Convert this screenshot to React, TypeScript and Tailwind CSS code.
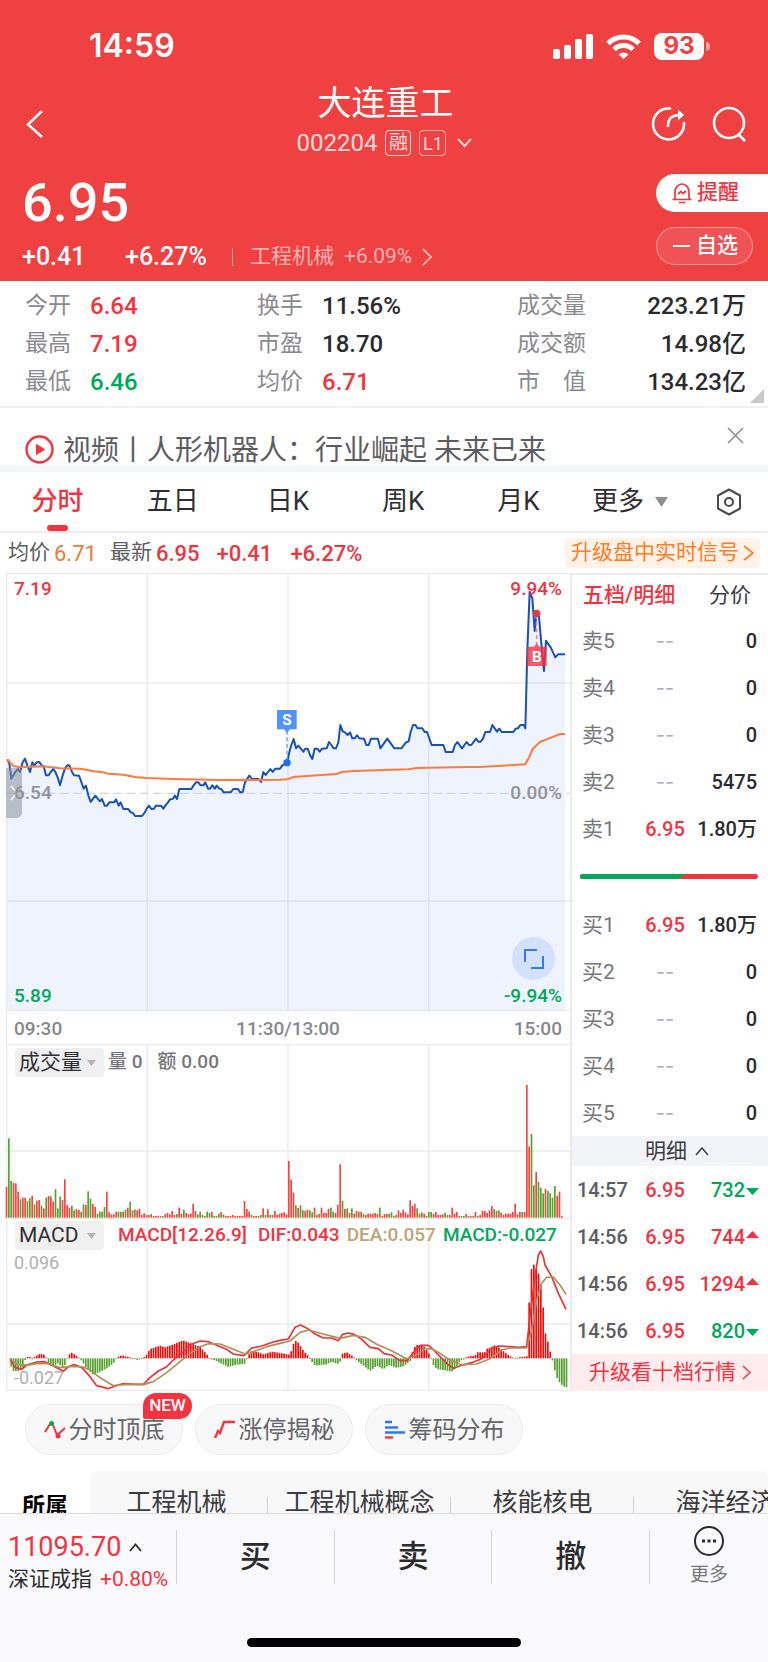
import React from 'react';

type Pt = [number, number];

/* Chart data is stored in chart units: three units per CSS pixel.
   The afternoon session starts AFTERNOON units to the right. */
const AFTERNOON = 840;
const join = (am: Pt[], pm: Pt[]): Pt[] => [...am, ...pm.map(([x, y]): Pt => [x + AFTERNOON, y])];
const line = (pts: Pt[]) => 'M' + pts.map((p) => p.join(' ')).join('L');

const price = join(
  [[22,568],[28,580],[34,626],[40,616],[46,606],[54,597],[60,606],[68,577],[75,566],[82,586],[90,606],[97,577],[103,586],[110,577],[118,576],[125,586],[131,588],[138,616],[146,616],[152,606],[160,597],[166,606],[173,622],[180,646],[188,616],[195,595],[202,586],[208,586],[216,606],[222,616],[237,617],[244,636],[251,656],[258,647],[265,676],[272,696],[279,686],[286,677],[293,686],[300,694],[306,687],[314,707],[321,707],[328,697],[342,697],[348,688],[356,707],[362,697],[370,717],[385,717],[392,727],[398,728],[405,738],[426,738],[434,728],[440,716],[447,707],[454,717],[462,716],[468,707],[483,707],[490,716],[498,704],[504,697],[510,688],[518,687],[525,677],[531,687],[538,657],[574,657],[581,646],[588,637],[595,637],[602,646],[610,646],[616,637],[624,656],[630,656],[637,646],[644,656],[650,647],[658,656],[664,657],[671,667],[692,667],[700,657],[714,657],[721,667],[728,667],[735,637],[748,617],[756,627],[776,627],[783,636],[790,606],[797,615],[811,597],[818,606],[826,596],[840,596],[847,586],[861,578]],
  [[22,577],[28,546],[34,525],[41,507],[48,535],[55,527],[62,535],[70,545],[76,536],[83,536],[90,555],[97,567],[104,536],[112,536],[119,545],[126,536],[140,535],[147,516],[154,525],[161,535],[168,535],[175,517],[181,465],[188,484],[195,487],[203,495],[210,487],[217,505],[224,505],[231,496],[238,505],[252,506],[259,525],[266,525],[273,506],[294,506],[301,535],[322,506],[343,535],[364,535],[378,517],[386,514],[392,486],[399,465],[406,465],[413,475],[427,475],[434,486],[441,486],[455,525],[490,525],[497,546],[518,546],[525,525],[532,516],[546,535],[560,516],[567,525],[574,525],[588,506],[595,515],[602,515],[609,506],[616,486],[630,486],[637,465],[651,485],[658,476],[665,486],[700,486],[707,476],[714,475],[721,465],[731,465],[736,475],[742,240],[749,65],[757,85],[764,183],[770,128],[777,140],[784,220],[792,303],[798,212],[812,232],[826,262],[834,253],[855,253]],
);

const average = join(
  [[22,568],[40,588],[60,592],[130,589],[180,595],[240,596],[260,599],[280,604],[310,607],[325,611],[370,614],[410,622],[440,624],[520,627],[660,630],[780,630],[840,629]],
  [[22,628],[40,621],[80,618],[170,612],[185,606],[220,603],[385,598],[410,594],[560,591],[600,591],[700,585],[736,583],[748,560],[757,538],[780,516],[800,508],[840,492],[855,492]],
);

/* One bar per minute; a negative value marks a falling minute. */
const volume = [
  92,-238,-110,105,103,78,-55,60,60,-50,-58,66,-40,50,53,-36,28,-60,65,64,48,-85,-28,-63,53,115,38,30,-36,-22,26,23,-18,-40,38,-79,-57,41,32,-12,-18,-18,-32,78,16,10,10,18,-18,-18,18,-24,30,-48,22,-25,22,27,8,13,
  8,8,-11,5,5,6,-5,-5,10,14,10,20,8,-11,30,12,-24,14,10,12,42,20,-10,-18,-8,5,-18,-14,17,-5,-5,-12,17,-10,5,5,5,8,5,5,5,5,50,26,18,-8,5,5,-5,-8,28,-8,25,-8,8,20,8,12,14,16,
  10,170,114,75,-37,29,-37,-22,20,24,-22,-16,30,8,-11,30,14,14,26,-30,-18,14,38,160,-51,26,-28,14,-28,12,20,-18,18,-11,8,12,12,12,14,11,-30,5,11,11,-12,-16,-5,8,22,14,24,16,10,52,35,41,-28,12,-16,12,
  5,-17,-17,11,17,8,8,10,-15,-8,8,30,12,17,-5,-5,-5,11,5,-5,5,17,-5,8,21,20,14,22,35,-26,20,-22,15,8,12,12,12,17,42,10,17,-17,17,398,213,-251,-97,137,-107,-90,-73,86,-80,-74,-60,-95,65,78,5,
];

const histogramKeys = join(
  [[33,-25],[40,-38],[54,-38],[68,-28],[75,-5],[82,4],[90,4],[96,-3],[104,5],[120,14],[135,10],[145,-15],[152,-22],[165,-20],[175,-14],[187,-28],[194,-20],[200,-4],[206,10],[213,17],[222,12],[235,3],[245,-8],[260,-30],[280,-50],[300,-40],[320,-30],[340,-15],[350,3],[365,9],[385,4],[400,-1],[412,-5],[425,-2],[437,8],[450,28],[480,38],[495,33],[520,42],[548,54],[570,46],[600,34],[620,12],[630,-2],[645,-6],[660,-14],[685,-26],[705,-20],[735,-16],[745,10],[755,22],[775,18],[790,12],[815,20],[840,16]],
  [[15,14],[25,10],[35,24],[43,55],[55,46],[70,22],[88,3],[95,-10],[105,-22],[140,-18],[155,-10],[172,-17],[180,-10],[185,14],[200,18],[220,5],[228,-5],[245,-18],[270,-38],[290,-22],[310,-33],[325,-20],[350,-28],[370,-24],[390,-8],[400,30],[410,40],[430,38],[445,17],[452,3],[458,-18],[470,-32],[495,-36],[515,-40],[525,-32],[540,-6],[552,-3],[560,5],[585,8],[590,18],[615,18],[620,28],[645,40],[665,25],[690,6],[705,-1],[715,3],[740,6],[744,100],[750,235],[757,292],[765,270],[773,262],[781,232],[788,165],[795,78],[803,50],[810,20],[817,-6],[824,-36],[832,-62],[840,-75],[850,-84],[862,-88]],
);

function valueAt(keys: Pt[], x: number): number {
  const i = keys.findIndex((k) => k[0] >= x);
  if (i <= 0) return keys[Math.max(i, 0)][1];
  const [x0, y0] = keys[i - 1];
  const [x1, y1] = keys[i];
  return y0 + ((y1 - y0) * (x - x0)) / (x1 - x0);
}
const histogram: Pt[] = Array.from({ length: 239 }, (_, i) => 33 + i * 7)
  .filter((x) => x <= 1702)
  .map((x): Pt => [x, valueAt(histogramKeys, x)]);

const dif = join(
  [[30,1046],[45,1072],[65,1078],[80,1065],[110,1056],[135,1055],[160,1068],[190,1084],[205,1070],[220,1064],[245,1072],[270,1100],[290,1127],[325,1136],[345,1128],[370,1121],[410,1123],[430,1123],[450,1103],[475,1083],[500,1070],[520,1050],[545,1030],[570,1004],[600,993],[625,995],[655,1008],[680,1018],[700,1032],[732,1037],[755,1014],[785,1008],[820,996]],
  [[0,991],[25,987],[45,952],[62,945],[85,957],[105,972],[130,984],[155,984],[175,992],[188,973],[205,969],[225,974],[245,988],[270,1012],[295,1016],[312,1031],[335,1035],[360,1052],[380,1052],[400,1028],[420,1006],[445,1006],[455,1014],[480,1040],[500,1060],[520,1075],[545,1066],[575,1058],[605,1046],[630,1020],[655,1008],[690,1010],[715,1012],[740,1010],[750,920],[765,800],[775,735],[782,723],[790,740],[795,765],[815,800],[835,850],[858,898]],
);
const dea = join(
  [[30,1046],[50,1062],[80,1066],[110,1061],[140,1060],[180,1073],[215,1069],[250,1071],[270,1080],[300,1103],[340,1127],[380,1123],[430,1124],[460,1115],[500,1088],[540,1055],[570,1030],[600,1010],[625,1001],[660,1002],[700,1018],[735,1032],[760,1025],[800,1010]],
  [[0,1000],[30,993],[60,967],[85,960],[130,972],[180,985],[220,976],[255,982],[290,1003],[330,1020],[380,1046],[410,1034],[435,1017],[455,1016],[480,1030],[510,1050],[545,1064],[590,1062],[630,1046],[665,1020],[690,1014],[740,1014],[755,960],[770,870],[785,820],[800,802],[820,801],[840,825],[858,853]],
);

const GRID = '#ebebed';

function Grid({ top, bottom, rows }: { top: number; bottom: number; rows: number[] }) {
  return (
    <g stroke={GRID} strokeWidth="4">
      {[20, 442, 864, 1286].map((x) => (
        <path key={x} d={`M${x} ${top}V${bottom}`} />
      ))}
      {rows.map((y) => (
        <path key={y} d={`M18 ${y}H1710`} />
      ))}
    </g>
  );
}

function StatusBar() {
  return (
    <div className="flex h-[84px] items-center justify-between pt-[8px] pr-[58px] pl-[89px]">
      <span className="font-['Inter'] text-[32px] font-semibold">14:59</span>
      <div className="flex items-center gap-[13px]">
        <svg width="40" height="25" viewBox="0 0 40 25" fill="#fff">
          <rect x="0" y="15" width="7" height="10" rx="2" />
          <rect x="11" y="11" width="7" height="14" rx="2" />
          <rect x="22" y="5" width="7" height="20" rx="2" />
          <rect x="33" y="0" width="7" height="25" rx="2" />
        </svg>
        <svg width="35" height="25" viewBox="0 0 35 25" fill="none" stroke="#fff" strokeWidth="5">
          <path d="M2 9.500a22 22 0 0 1 31 0" />
          <path d="M8 15.500a13.500 13.500 0 0 1 19 0" />
          <path d="M12.500 20.500a7 7 0 0 1 10 0L17.500 25z" fill="#fff" stroke="none" />
        </svg>
        <div className="flex items-center gap-[2px]">
          <span className="flex h-[27px] w-[50px] items-center justify-center rounded-[8px] bg-white font-['Inter'] text-[24px] font-bold text-[#ef4042]">
            93
          </span>
          <span className="h-[9px] w-[4px] rounded-r-full bg-white/50" />
        </div>
      </div>
    </div>
  );
}

function Header() {
  return (
    <header className="h-[281px] bg-[#ef4042] text-white">
      <StatusBar />
      <div className="flex h-[80px] items-center justify-between pr-[21px] pl-[24px]">
        <div className="flex w-[96px]">
          <button aria-label="返回">
            <svg width="22" height="30" viewBox="0 0 22 30" fill="none" stroke="#fff" strokeWidth="2.500">
              <path d="M18 2L4 15.500L18 28" />
            </svg>
          </button>
        </div>
        <div className="flex flex-col items-center pb-[10px]">
          <h1 className="text-[34px] leading-[48px]">大连重工</h1>
          <div className="flex h-[32px] items-center gap-[8px] text-white/80">
            <span className="text-[24px]">002204</span>
            <span className="flex h-[26px] w-[26px] items-center justify-center rounded-[4px] border border-white/80 text-[19px]">融</span>
            <span className="flex h-[26px] w-[27px] items-center justify-center rounded-[4px] border border-white/60 text-[18px]">L1</span>
            <svg width="20" height="12" viewBox="0 0 20 12" fill="none" stroke="#fff" strokeOpacity=".8" strokeWidth="2">
              <path d="M4 2L10.500 9L17 2" />
            </svg>
          </div>
        </div>
        <div className="flex w-[96px] items-center justify-end gap-[24px]">
          <button aria-label="分享">
            <svg width="36" height="36" viewBox="0 0 36 36" fill="none" stroke="#fff" strokeWidth="2.600" strokeLinecap="round">
              <path d="M19 2.500A15.500 15.500 0 1 0 33 17" />
              <path d="M17 20c0-7 4-11 12-11" />
              <path d="M27 3.500L33 9L27 14.500z" fill="#fff" stroke="none" />
            </svg>
          </button>
          <button aria-label="搜索">
            <svg width="36" height="36" viewBox="0 0 36 36" fill="none" stroke="#fff" strokeWidth="2.600">
              <circle cx="18" cy="17" r="15" />
              <path d="M27 28L34 35" />
            </svg>
          </button>
        </div>
      </div>
      <div className="flex justify-between pt-[10px] pl-[22px]">
        <div>
          <div className="h-[58px] text-[54px] leading-[58px] font-medium">6.95</div>
          <div className="mt-[8px] flex h-[34px] items-center text-[25px] font-medium">
            <span className="w-[103px]">+0.41</span>
            <span className="w-[107px]">+6.27%</span>
            <span className="mr-[17px] h-[18px] w-px bg-white/50" />
            <a href="#sector" className="flex items-center gap-[10px] text-[21px] font-normal text-white/60">
              <span>工程机械</span>
              <span>+6.09%</span>
              <svg width="10" height="18" viewBox="0 0 10 18" fill="none" stroke="#fff" strokeOpacity=".7" strokeWidth="1.600">
                <path d="M1 1L9 9L1 17" />
              </svg>
            </a>
          </div>
        </div>
        <div className="flex w-[112px] flex-col gap-[15px]">
          <button className="flex h-[38px] items-center gap-[4px] rounded-l-full bg-white pl-[15px] text-[21px] font-medium text-[#f5333f]">
            <svg width="22" height="22" viewBox="0 0 22 22" fill="none" stroke="#f5333f" strokeWidth="1.700">
              <path d="M4 17V10a7 8 0 0 1 14 0v7M1.500 17.500h19M8 20.500h6" />
              <path d="M7 12L10 9.500L12 11.500L15 9" />
            </svg>
            提醒
          </button>
          <button className="flex h-[38px] w-[97px] items-center gap-[6px] rounded-full border border-white/40 bg-white/10 pl-[16px] text-[21px] font-medium">
            <span className="h-[2px] w-[17px] bg-white" />
            自选
          </button>
        </div>
      </div>
    </header>
  );
}

const RED = 'text-[#f5333f]';
const GREEN = 'text-[#00a85a]';
const INK = 'text-[#2b2b2e]';

const stats = [
  [['今开', '6.64', RED], ['最高', '7.19', RED], ['最低', '6.46', GREEN]],
  [['换手', '11.56%', INK], ['市盈', '18.70', INK], ['均价', '6.71', RED]],
  [['成交量', '223.21万', INK], ['成交额', '14.98亿', INK], ['市　值', '134.23亿', INK]],
];
const statWidths = ['w-[232px]', 'flex-1', 'w-[229px]'];

function Stats() {
  return (
    <section className="relative flex h-[127px] border-b-2 border-[#f1f1f3] pt-[6px] pr-[22px] pl-[25px]">
      {stats.map((col, i) => (
        <dl key={i} className={statWidths[i]}>
          {col.map(([label, value, color]) => (
            <div key={label} className={`flex h-[38px] items-center ${i === 2 ? 'justify-between' : 'gap-[19px]'}`}>
              <dt className="text-[23px] text-[#8a8a8e]">{label}</dt>
              <dd className={`text-[24px] font-medium ${color}`}>{value}</dd>
            </div>
          ))}
        </dl>
      ))}
      <svg className="absolute right-[4px] bottom-[3px]" width="14" height="14" viewBox="0 0 14 14">
        <path d="M14 0V14H0z" fill="#c9c9cc" />
      </svg>
    </section>
  );
}

function NewsBar() {
  return (
    <section className="flex h-[64px] items-start justify-between border-b-[7px] border-[#f3f5fa] pr-[24px] pl-[25px]">
      <a href="#news" className="flex h-[57px] items-end gap-[9px] text-[28px] leading-[28px] whitespace-nowrap text-[#5d5d61]">
        <svg className="mb-[1px]" width="29" height="29" viewBox="0 0 29 29" fill="none" stroke="#f5333f" strokeWidth="2.400">
          <circle cx="14.500" cy="14.500" r="13" />
          <path d="M11.500 9.500L19.500 14.500L11.500 19.500z" fill="#f5333f" stroke="#f5333f" strokeWidth="1" />
        </svg>
        视频丨人形机器人：行业崛起 未来已来
      </a>
      <button aria-label="关闭" className="pt-[19px]">
        <svg width="17" height="17" viewBox="0 0 17 17" stroke="#8f8f94" strokeWidth="1.600">
          <path d="M1 1L16 16M16 1L1 16" />
        </svg>
      </button>
    </section>
  );
}

function Tabs() {
  return (
    <nav className="flex h-[61px] items-center border-b-2 border-[#ececee] text-[26px] text-[#2f2f33]">
      {['分时', '五日', '日K', '周K', '月K'].map((tab, i) => (
        <button
          key={tab}
          className={
            i === 0
              ? 'relative flex h-full w-[15%] items-center justify-center font-medium text-[#f5333f]'
              : 'flex h-full w-[15%] items-center justify-center'
          }
        >
          {tab}
          {i === 0 && <span className="absolute bottom-0 h-[6px] w-[21px] rounded-full bg-[#f5333f]" />}
        </button>
      ))}
      <button className="ml-[16px] flex items-center gap-[11px]">
        更多
        <svg width="13" height="10" viewBox="0 0 13 10">
          <path d="M0 0H13L6.500 10z" fill="#8f8f94" />
        </svg>
      </button>
      <button aria-label="设置" className="mr-[25px] ml-auto">
        <svg width="28" height="28" viewBox="0 0 28 28" fill="none" stroke="#4a4a4e" strokeWidth="2" strokeLinejoin="round">
          <path d="M14 1.500L25 7.500V20.500L14 26.500L3 20.500V7.500z" />
          <circle cx="14" cy="14" r="4" />
        </svg>
      </button>
    </nav>
  );
}

function InfoRow() {
  return (
    <div className="flex h-[40px] items-center pr-[8px] pl-[8px] text-[22px]">
      <span className="text-[21px] text-[#5d5d61]">均价</span>
      <span className="ml-[4px] text-[#ee7a3a]">6.71</span>
      <span className="ml-[13px] text-[21px] text-[#5d5d61]">最新</span>
      <span className="ml-[4px] font-medium text-[#f5333f]">6.95</span>
      <span className="ml-[17px] font-medium text-[#f5333f]">+0.41</span>
      <span className="ml-[18px] font-medium text-[#f5333f]">+6.27%</span>
      <button className="ml-auto flex h-[30px] items-center gap-[4px] rounded-[4px] bg-[#fff2e8] pr-[6px] pl-[6px] text-[21px] text-[#ff7d1f]">
        升级盘中实时信号
        <svg width="11" height="16" viewBox="0 0 11 16" fill="none" stroke="#ff7d1f" strokeWidth="1.600">
          <path d="M1 1L10 8L1 15" />
        </svg>
      </button>
    </div>
  );
}

function PriceChart() {
  return (
    <div className="relative h-[438px] text-[19px] leading-[20px] font-medium">
      <svg className="h-full w-full" viewBox="0 9 1710 1314" preserveAspectRatio="none">
        <Grid top={9} bottom={1323} rows={[11, 339, 993, 1321]} />
        <path d={`${line(price)}L1695 1321H22z`} fill="#3b78f0" fillOpacity=".085" />
        <path d="M20 670H1708" stroke="#cdd6e2" strokeWidth="4" strokeDasharray="26 14" />
        <path d={line(price)} fill="none" stroke="#1a50b8" strokeWidth="6" strokeLinejoin="round" />
        <path d={line(average)} fill="none" stroke="#ff7a3c" strokeWidth="6" strokeLinejoin="round" />
        <path d="M861 482V575" stroke="#6b9ffa" strokeWidth="4" strokeDasharray="12 8" />
        <circle cx="861" cy="578" r="11" fill="#1f6fff" />
        <path d="M831 420H890V478H870L861 488L852 478H831z" fill="#5292ff" />
        <text x="861" y="465" textAnchor="middle" fontSize="46" fontWeight="700" fill="#fff">S</text>
        <path d="M1610 135V222" stroke="#f58a92" strokeWidth="5" strokeDasharray="12 8" />
        <circle cx="1610" cy="130" r="11" fill="#f5333f" />
        <path d="M1581 230H1602L1610 220L1618 230H1640V288H1581z" fill="#f5333f" fillOpacity=".8" />
        <text x="1611" y="276" textAnchor="middle" fontSize="46" fontWeight="700" fill="#fff">B</text>
      </svg>
      <button aria-label="展开" className="absolute top-[195px] left-[6px] flex h-[50px] w-[16px] items-center justify-center rounded-r-[5px] bg-[#8c929c]/55">
        <svg width="8" height="16" viewBox="0 0 8 16" fill="none" stroke="#fff" strokeWidth="1.500">
          <path d="M1 1L7 8L1 15" />
        </svg>
      </button>
      <span className="absolute top-[6px] left-[14px] text-[#f5333f]">7.19</span>
      <span className="absolute top-[6px] right-[8px] text-[#f5333f]">9.94%</span>
      <span className="absolute top-[210px] left-[14px] text-[#929297]">6.54</span>
      <span className="absolute top-[210px] right-[8px] text-[#929297]">0.00%</span>
      <span className="absolute bottom-[5px] left-[14px] text-[#00a85a]">5.89</span>
      <span className="absolute right-[8px] bottom-[5px] text-[#00a85a]">-9.94%</span>
      <button aria-label="全屏" className="absolute right-[15px] bottom-[31px] flex h-[43px] w-[43px] items-center justify-center rounded-full bg-[#d3e0fe]">
        <svg width="20" height="20" viewBox="0 0 20 20" fill="none" stroke="#3378f6" strokeWidth="2">
          <path d="M1 13V1H13M19 7V19H7" />
        </svg>
      </button>
    </div>
  );
}

function Picker({ label }: { label: string }) {
  return (
    <button className="flex h-[29px] w-[89px] items-center justify-between rounded-[4px] bg-[#f0f0f1] pr-[8px] pl-[4px] text-[21px] leading-[29px] font-normal text-[#2f2f33]">
      {label}
      <svg width="9" height="6" viewBox="0 0 9 6">
        <path d="M0 0H9L4.500 6z" fill="#b4b4b8" />
      </svg>
    </button>
  );
}

function VolumeChart() {
  return (
    <div className="relative h-[174px]">
      <svg className="h-full w-full" viewBox="0 102 1710 522" preserveAspectRatio="none">
        <Grid top={102} bottom={624} rows={[104, 423]} />
        {volume.map((v, i) => (
          <rect key={i} x={17 + i * 7} y={623 - Math.abs(v)} width="5" height={Math.abs(v)} fill={v < 0 ? '#55a02e' : '#ff4040'} />
        ))}
      </svg>
      <div className="absolute top-[4px] left-[15px] flex items-center text-[19px] font-medium text-[#77777b]">
        <Picker label="成交量" />
        <span className="ml-[4px]">量 0</span>
        <span className="ml-[15px]">额 0.00</span>
      </div>
    </div>
  );
}

function MacdChart() {
  return (
    <div className="relative h-[173px]">
      <svg className="h-full w-full" viewBox="0 624 1710 519" preserveAspectRatio="none">
        <Grid top={624} bottom={1143} rows={[626, 942, 1141]} />
        {histogram.map(([x, v]) => (
          <rect key={x} x={x - 2} y={v > 0 ? 1045 - v : 1045} width="5" height={Math.max(Math.abs(v), 2)} fill={v < 0 ? '#55a02e' : '#f50a0a'} />
        ))}
        <path d={line(dif)} fill="none" stroke="#e8323c" strokeWidth="5" strokeLinejoin="round" />
        <path d={line(dea)} fill="none" stroke="#b0905a" strokeWidth="5" strokeLinejoin="round" />
      </svg>
      <div className="absolute top-[3px] left-[15px] flex items-center text-[19px] font-medium whitespace-nowrap">
        <Picker label="MACD" />
        <span className="ml-[14px] text-[#f5333f]">MACD[12.26.9]</span>
        <span className="ml-[11px] text-[#f5333f]">DIF:0.043</span>
        <span className="ml-[7px] text-[#bda57a]">DEA:0.057</span>
        <span className="ml-[7px] text-[#00a85a]">MACD:-0.027</span>
      </div>
      <span className="absolute top-[34px] left-[14px] text-[18px] leading-[22px] text-[#b0b0b4]">0.096</span>
      <span className="absolute bottom-[2px] left-[14px] text-[18px] leading-[22px] text-[#b0b0b4]">-0.027</span>
    </div>
  );
}

function Charts() {
  return (
    <section className="min-w-0 flex-1">
      <PriceChart />
      <div className="ml-[6px] flex h-[33px] items-center justify-between border-l border-[#e6e6e8] pt-[3px] pr-[8px] pl-[7px] text-[19px] font-medium text-[#88888c]">
        <span>09:30</span>
        <span>11:30/13:00</span>
        <span>15:00</span>
      </div>
      <VolumeChart />
      <MacdChart />
    </section>
  );
}

const sells = [['卖5', '--', '0'], ['卖4', '--', '0'], ['卖3', '--', '0'], ['卖2', '--', '5475'], ['卖1', '6.95', '1.80万']];
const buys = [['买1', '6.95', '1.80万'], ['买2', '--', '0'], ['买3', '--', '0'], ['买4', '--', '0'], ['买5', '--', '0']];
const trades: [string, string, string, boolean][] = [
  ['14:57', '6.95', '732', false],
  ['14:56', '6.95', '744', true],
  ['14:56', '6.95', '1294', true],
  ['14:56', '6.95', '820', false],
];

function QuoteTable({ rows }: { rows: string[][] }) {
  return (
    <table className="w-full table-fixed text-[20px] leading-[24px]">
      <tbody>
        {rows.map(([name, p, qty]) => (
          <tr key={name} className="h-[47px]">
            <th className="w-[64px] pl-[10px] text-left text-[21px] font-normal text-[#77777b]">{name}</th>
            <td className={p === '--' ? "w-[58px] text-center font-['Inter'] text-[#a9b1bd]" : 'w-[58px] text-center font-medium text-[#f5333f]'}>{p}</td>
            <td className="pr-[11px] text-right font-medium whitespace-nowrap text-[#2b2b2e]">{qty}</td>
          </tr>
        ))}
      </tbody>
    </table>
  );
}

function OrderBook() {
  return (
    <aside className="w-[198px] border-t-2 border-l-2 border-[#ebebed]">
      <div className="flex h-[42px] items-center justify-between pr-[17px] pl-[11px] text-[21px]">
        <button className="font-medium text-[#f5333f]">五档/明细</button>
        <button className="text-[#3c3c40]">分价</button>
      </div>
      <QuoteTable rows={sells} />
      <div className="flex h-[49px] items-center pr-[10px] pl-[8px]">
        <svg className="h-[5px] w-full" viewBox="0 0 178 5" preserveAspectRatio="none">
          <rect width="178" height="5" rx="2.500" fill="#f5333f" />
          <path d="M2.500 0H106L98 5H2.500A2.500 2.500 0 0 1 2.500 0z" fill="#00a85a" />
        </svg>
      </div>
      <QuoteTable rows={buys} />
      <button className="flex h-[30px] w-full items-center justify-center gap-[8px] bg-[#f3f4f9] pl-[14px] text-[21px] leading-[30px] text-[#3c3c40]">
        明细
        <svg width="14" height="9" viewBox="0 0 14 9" fill="none" stroke="#3c3c40" strokeWidth="1.500">
          <path d="M1 8L7 1L13 8" />
        </svg>
      </button>
      <table className="w-full table-fixed text-[20px] leading-[24px] font-medium">
        <tbody>
          {trades.map(([time, p, qty, up], i) => (
            <tr key={i} className="h-[47px]">
              <td className="w-[64px] pl-[5px] text-[#5d5d61]">{time}</td>
              <td className="w-[58px] text-center text-[#f5333f]">{p}</td>
              <td className={`pr-[9px] ${up ? RED : GREEN}`}>
                <div className="flex items-center justify-end gap-[1px]">
                  {qty}
                  <svg width="13" height="12" viewBox="0 0 13 12" fill="currentColor">
                    <path d={up ? 'M0 7L6.500 0L13 7z' : 'M0 4H13L6.500 11z'} />
                  </svg>
                </div>
              </td>
            </tr>
          ))}
        </tbody>
      </table>
      <button className="flex h-[37px] w-full items-center justify-center gap-[6px] bg-[#ffecee] text-[21px] text-[#f5333f]">
        升级看十档行情
        <svg width="9" height="15" viewBox="0 0 9 15" fill="none" stroke="#f5333f" strokeWidth="1.500">
          <path d="M1 1L8 7.500L1 14" />
        </svg>
      </button>
    </aside>
  );
}

const chips = [
  {
    label: '分时顶底',
    icon: (
      <svg width="22" height="20" viewBox="0 0 22 20" fill="none" stroke="#f5333f" strokeWidth="2">
        <path d="M1 12L6 4M9 5L13 15L21 8" />
        <circle cx="7.500" cy="3.500" r="2.500" fill="#00a85a" stroke="none" />
        <circle cx="14" cy="16" r="2.500" fill="#f5333f" stroke="none" />
      </svg>
    ),
  },
  {
    label: '涨停揭秘',
    icon: (
      <svg width="22" height="20" viewBox="0 0 22 20" fill="none" stroke="#f5333f" strokeWidth="2.400">
        <path d="M1 18L4 11L6 13L10 2H21" />
      </svg>
    ),
  },
  {
    label: '筹码分布',
    icon: (
      <svg width="22" height="20" viewBox="0 0 22 20" fill="none" strokeWidth="2.400">
        <path d="M1 2H8M1 7.500H14M1 12.500H21" stroke="#2f74ff" />
        <path d="M1 17.500H9" stroke="#f5333f" />
      </svg>
    ),
  },
];

function Chips() {
  return (
    <div className="flex gap-[12px] pt-[13px] pl-[25px]">
      {chips.map(({ label, icon }, i) => (
        <button key={label} className="relative flex h-[51px] w-[158px] items-center justify-center gap-[3px] rounded-full border border-[#ebebed] bg-[#f8f8f9] text-[24px] text-[#66666a]">
          {icon}
          {label}
          {i === 0 && (
            <span className="absolute -top-[12px] -right-[10px] flex h-[26px] w-[49px] items-center justify-center rounded-[13px] rounded-bl-[2px] bg-[#f5333f] text-[17px] font-medium text-white">
              NEW
            </span>
          )}
        </button>
      ))}
    </div>
  );
}

function Sectors() {
  return (
    <div className="mt-[16px] flex h-[42px] overflow-hidden">
      <h2 className="w-[90px] shrink-0 pt-[20px] pl-[22px] text-[23px] leading-[32px] font-bold text-black">所属</h2>
      <div className="flex min-w-0 flex-1 rounded-t-[8px] bg-[#f8f8f8] pt-[16px] text-[25px] leading-[32px] text-[#3c3c40]">
        {['工程机械', '工程机械概念', '核能核电', '海洋经济'].map((name, i) => (
          <a key={name} href="#sector" className="relative -ml-[10px] flex w-[193px] shrink-0 justify-center whitespace-nowrap">
            {i > 0 && <span className="absolute top-[10px] left-[4px] h-[30px] w-px bg-[#d0d0d3]" />}
            {name}
          </a>
        ))}
      </div>
    </div>
  );
}

function Footer() {
  return (
    <footer className="h-[149px] border-t border-[#dcdcdf] bg-[#fafafc]">
      <div className="flex h-[106px] items-start pt-[16px]">
        <button className="w-[176px] shrink-0 pl-[8px] text-left whitespace-nowrap">
          <span className="flex h-[34px] items-center gap-[8px] text-[27px] text-[#f5333f]">
            11095.70
            <svg width="13" height="9" viewBox="0 0 13 9" fill="none" stroke="#2b2b2e" strokeWidth="1.800">
              <path d="M1 8L6.500 1.500L12 8" />
            </svg>
          </span>
          <span className="flex h-[32px] items-center gap-[8px] text-[21px] text-[#2b2b2e]">
            深证成指<span className="text-[#f5333f]">+0.80%</span>
          </span>
        </button>
        {['买', '卖', '撤'].map((action) => (
          <button key={action} className="h-[54px] flex-1 border-l border-[#d6d6d9] text-[31px] font-medium text-[#2b2b2e]">
            {action}
          </button>
        ))}
        <div className="h-[54px] w-[119px] shrink-0 border-l border-[#d6d6d9]">
          <button className="-mt-[5px] flex w-full flex-col items-center gap-[4px] text-[19px] leading-[28px] text-[#77777b]">
            <svg width="32" height="32" viewBox="0 0 32 32" fill="none" stroke="#2b2b2e" strokeWidth="2">
              <circle cx="16" cy="16" r="14" />
              <path d="M9 16h3M14.500 16h3M20 16h3" strokeWidth="3" />
            </svg>
            更多
          </button>
        </div>
      </div>
      <div className="flex justify-center pt-[18px]">
        <span className="h-[9px] w-[274px] rounded-full bg-black" />
      </div>
    </footer>
  );
}

export default function App() {
  return (
    <main lang="zh-CN" className="w-full overflow-hidden bg-white font-['Roboto','Noto_Sans_CJK_SC',sans-serif]">
      <Header />
      <Stats />
      <NewsBar />
      <Tabs />
      <InfoRow />
      <div className="flex">
        <Charts />
        <OrderBook />
      </div>
      <Chips />
      <Sectors />
      <Footer />
    </main>
  );
}
